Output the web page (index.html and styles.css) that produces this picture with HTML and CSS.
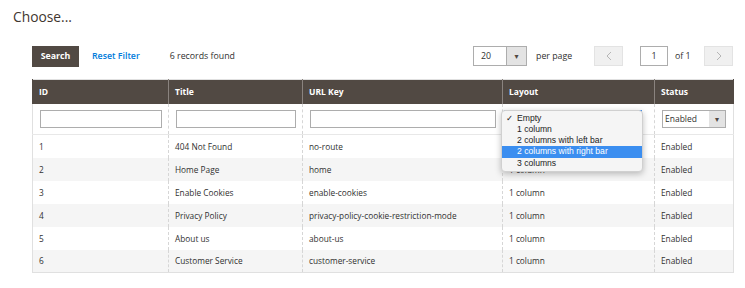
FILE: index.html
```html
<!DOCTYPE html>
<html>
<head>
<meta charset="utf-8">
<link rel="stylesheet" href="styles.css">
</head>
<body>
<div class="page">
  <h1 class="title">Choose...</h1>
  <div class="grid-wrap">
    <div class="toolbar">
      <div class="tb-left">
        <button class="btn-search">Search</button>
        <span class="reset">Reset Filter</span>
        <span class="count">6 records found</span>
      </div>
      <div class="tb-right">
        <div class="perpage"><span class="pp-val">20</span><span class="pp-arrow">▾</span></div>
        <span class="pp-label">per page</span>
        <div class="pager-btn prev"><svg width="6" height="10" viewBox="0 0 6 10"><path d="M5 1 L1 5 L5 9" fill="none" stroke="#b5b5b5" stroke-width="1"/></svg></div>
        <div class="page-input">1</div>
        <span class="of">of 1</span>
        <div class="pager-btn next"><svg width="6" height="10" viewBox="0 0 6 10"><path d="M1 1 L5 5 L1 9" fill="none" stroke="#b5b5b5" stroke-width="1"/></svg></div>
      </div>
    </div>
    <table class="grid">
      <colgroup>
        <col class="c-id"><col class="c-title"><col class="c-url"><col class="c-layout"><col class="c-status">
      </colgroup>
      <thead>
        <tr class="head"><th>ID</th><th>Title</th><th>URL Key</th><th>Layout</th><th>Status</th></tr>
        <tr class="filters">
          <td><div class="f-input"></div></td>
          <td><div class="f-input"></div></td>
          <td><div class="f-input"></div></td>
          <td class="layout-cell">
            <div class="f-select focused"><span class="updown">⬍</span></div>
            <div class="menu">
              <div class="item"><span class="check">✓</span>Empty</div>
              <div class="item">1 column</div>
              <div class="item">2 columns with left bar</div>
              <div class="item active">2 columns with right bar</div>
              <div class="item">3 columns</div>
            </div>
          </td>
          <td><div class="f-select status"><span class="sv">Enabled</span><span class="sa">▾</span></div></td>
        </tr>
      </thead>
      <tbody>
        <tr><td>1</td><td>404 Not Found</td><td>no-route</td><td>1 column</td><td>Enabled</td></tr>
        <tr class="alt"><td>2</td><td>Home Page</td><td>home</td><td>1 column</td><td>Enabled</td></tr>
        <tr><td>3</td><td>Enable Cookies</td><td>enable-cookies</td><td>1 column</td><td>Enabled</td></tr>
        <tr class="alt"><td>4</td><td>Privacy Policy</td><td>privacy-policy-cookie-restriction-mode</td><td>1 column</td><td>Enabled</td></tr>
        <tr><td>5</td><td>About us</td><td>about-us</td><td>1 column</td><td>Enabled</td></tr>
        <tr class="alt"><td>6</td><td>Customer Service</td><td>customer-service</td><td>1 column</td><td>Enabled</td></tr>
      </tbody>
    </table>
  </div>
</div>
</body>
</html>
```
FILE: styles.css
```css
* { box-sizing: border-box; }
html, body { margin: 0; padding: 0; background: #fff; }
body { font-family: "Open Sans", "DejaVu Sans", sans-serif; color: #303030; }
.page { padding: 8px 12px 0 13px; }
.title { margin: 0; font-size: 13.8px; font-weight: 400; color: #41362f; line-height: 18px; }
.grid-wrap { margin: 19px 0 0 19px; width: 701px; }
.toolbar { display: flex; justify-content: space-between; align-items: center; height: 21px; margin-bottom: 13px; }
.tb-left { display: flex; align-items: center; height: 21px; }
.btn-search { width: 47px; height: 21px; background: #514943; color: #fff; border: 1px solid #514943; font-family: inherit; font-size: 8.8px; font-weight: 700; padding: 0; margin-top: 1px; }
.reset { margin-left: 13px; color: #007bdb; font-size: 8.8px; font-weight: 600; }
.count { margin-left: 30px; font-size: 8.8px; color: #303030; }
.tb-right { display: flex; align-items: center; height: 21px; }
.perpage { width: 54px; height: 20px; border: 1px solid #adadad; display: flex; background: #fff; }
.pp-val { flex: 1; font-size: 8.8px; padding-left: 7px; line-height: 18px; }
.pp-arrow { width: 20px; background: #e3e3e3; border-left: 1px solid #adadad; font-size: 8px; color: #514943; text-align: center; line-height: 18px; }
.pp-label { margin-left: 9px; width: 36px; font-size: 8.8px; white-space: nowrap; }
.pager-btn { width: 29px; height: 20px; background: #f0f0f0; border: 1px solid #e3e3e3; display: flex; align-items: center; justify-content: center; }
.prev { margin-left: 22px; }
.page-input { margin-left: 17px; width: 28px; height: 20px; border: 1px solid #adadad; font-size: 8.8px; text-align: center; line-height: 18px; background: #fff; }
.of { margin-left: 7px; width: 18px; font-size: 8.8px; white-space: nowrap; }
.next { margin-left: 11px; }
.grid { border-collapse: collapse; table-layout: fixed; width: 701px; font-size: 8.3px; border: 1px solid #e0e0e0; }
.c-id { width: 136px; } .c-title { width: 134px; } .c-url { width: 200px; } .c-layout { width: 152px; } .c-status { width: 79px; }
.head th { background: #514943; color: #fff; font-weight: 700; font-size: 8.5px; text-align: left; height: 24px; padding: 0 6px; border-left: 1px solid #8a837f; border-right: 1px solid #8a837f; }
.head th:first-child { border-left-color: #514943; }
.head th:last-child { border-right-color: #514943; }
.grid td { padding: 0 6px; border-left: 1px dashed #d6d6d6; border-right: 1px dashed #d6d6d6; height: 23px; white-space: nowrap; }
.filters td { height: 31px; border-bottom: 1px solid #e8e8e8; }
.f-input { height: 18px; border: 1px solid #adadad; background: #fff; margin-left: 1px; }
.layout-cell { position: relative; }
.f-select { height: 18px; border: 1px solid #adadad; background: #fff; position: relative; }
.focused { border-color: #3e8ef0; margin: 0 6px 0 -5px; }
.updown { position: absolute; right: 2px; top: 3px; font-size: 8px; color: #555; }
.status { display: flex; width: 64px; margin-left: 1px; }
.sv { flex: 1; padding-left: 2px; line-height: 16px; font-size: 8.5px; }
.sa { width: 16px; background: #e3e3e3; text-align: center; font-size: 8px; line-height: 16px; color: #514943; }
.alt td { background: #f5f5f5; }
.menu { position: absolute; left: -2px; top: 6px; width: 142px; padding: 2px 0; background: #f5f5f5; border: 1px solid #d0d0d0; border-radius: 4px; box-shadow: 0 2px 6px rgba(0,0,0,0.25); z-index: 5; font-family: "Liberation Sans", Arial, sans-serif; font-size: 8.6px; color: #222; }
.item { height: 11.3px; line-height: 11.3px; padding-left: 15px; position: relative; }
.check { position: absolute; left: 4px; font-family: "DejaVu Sans", sans-serif; font-size: 8.5px; font-weight: 700; }
.item.active { background: #3b8ef0; color: #fff; }
```
